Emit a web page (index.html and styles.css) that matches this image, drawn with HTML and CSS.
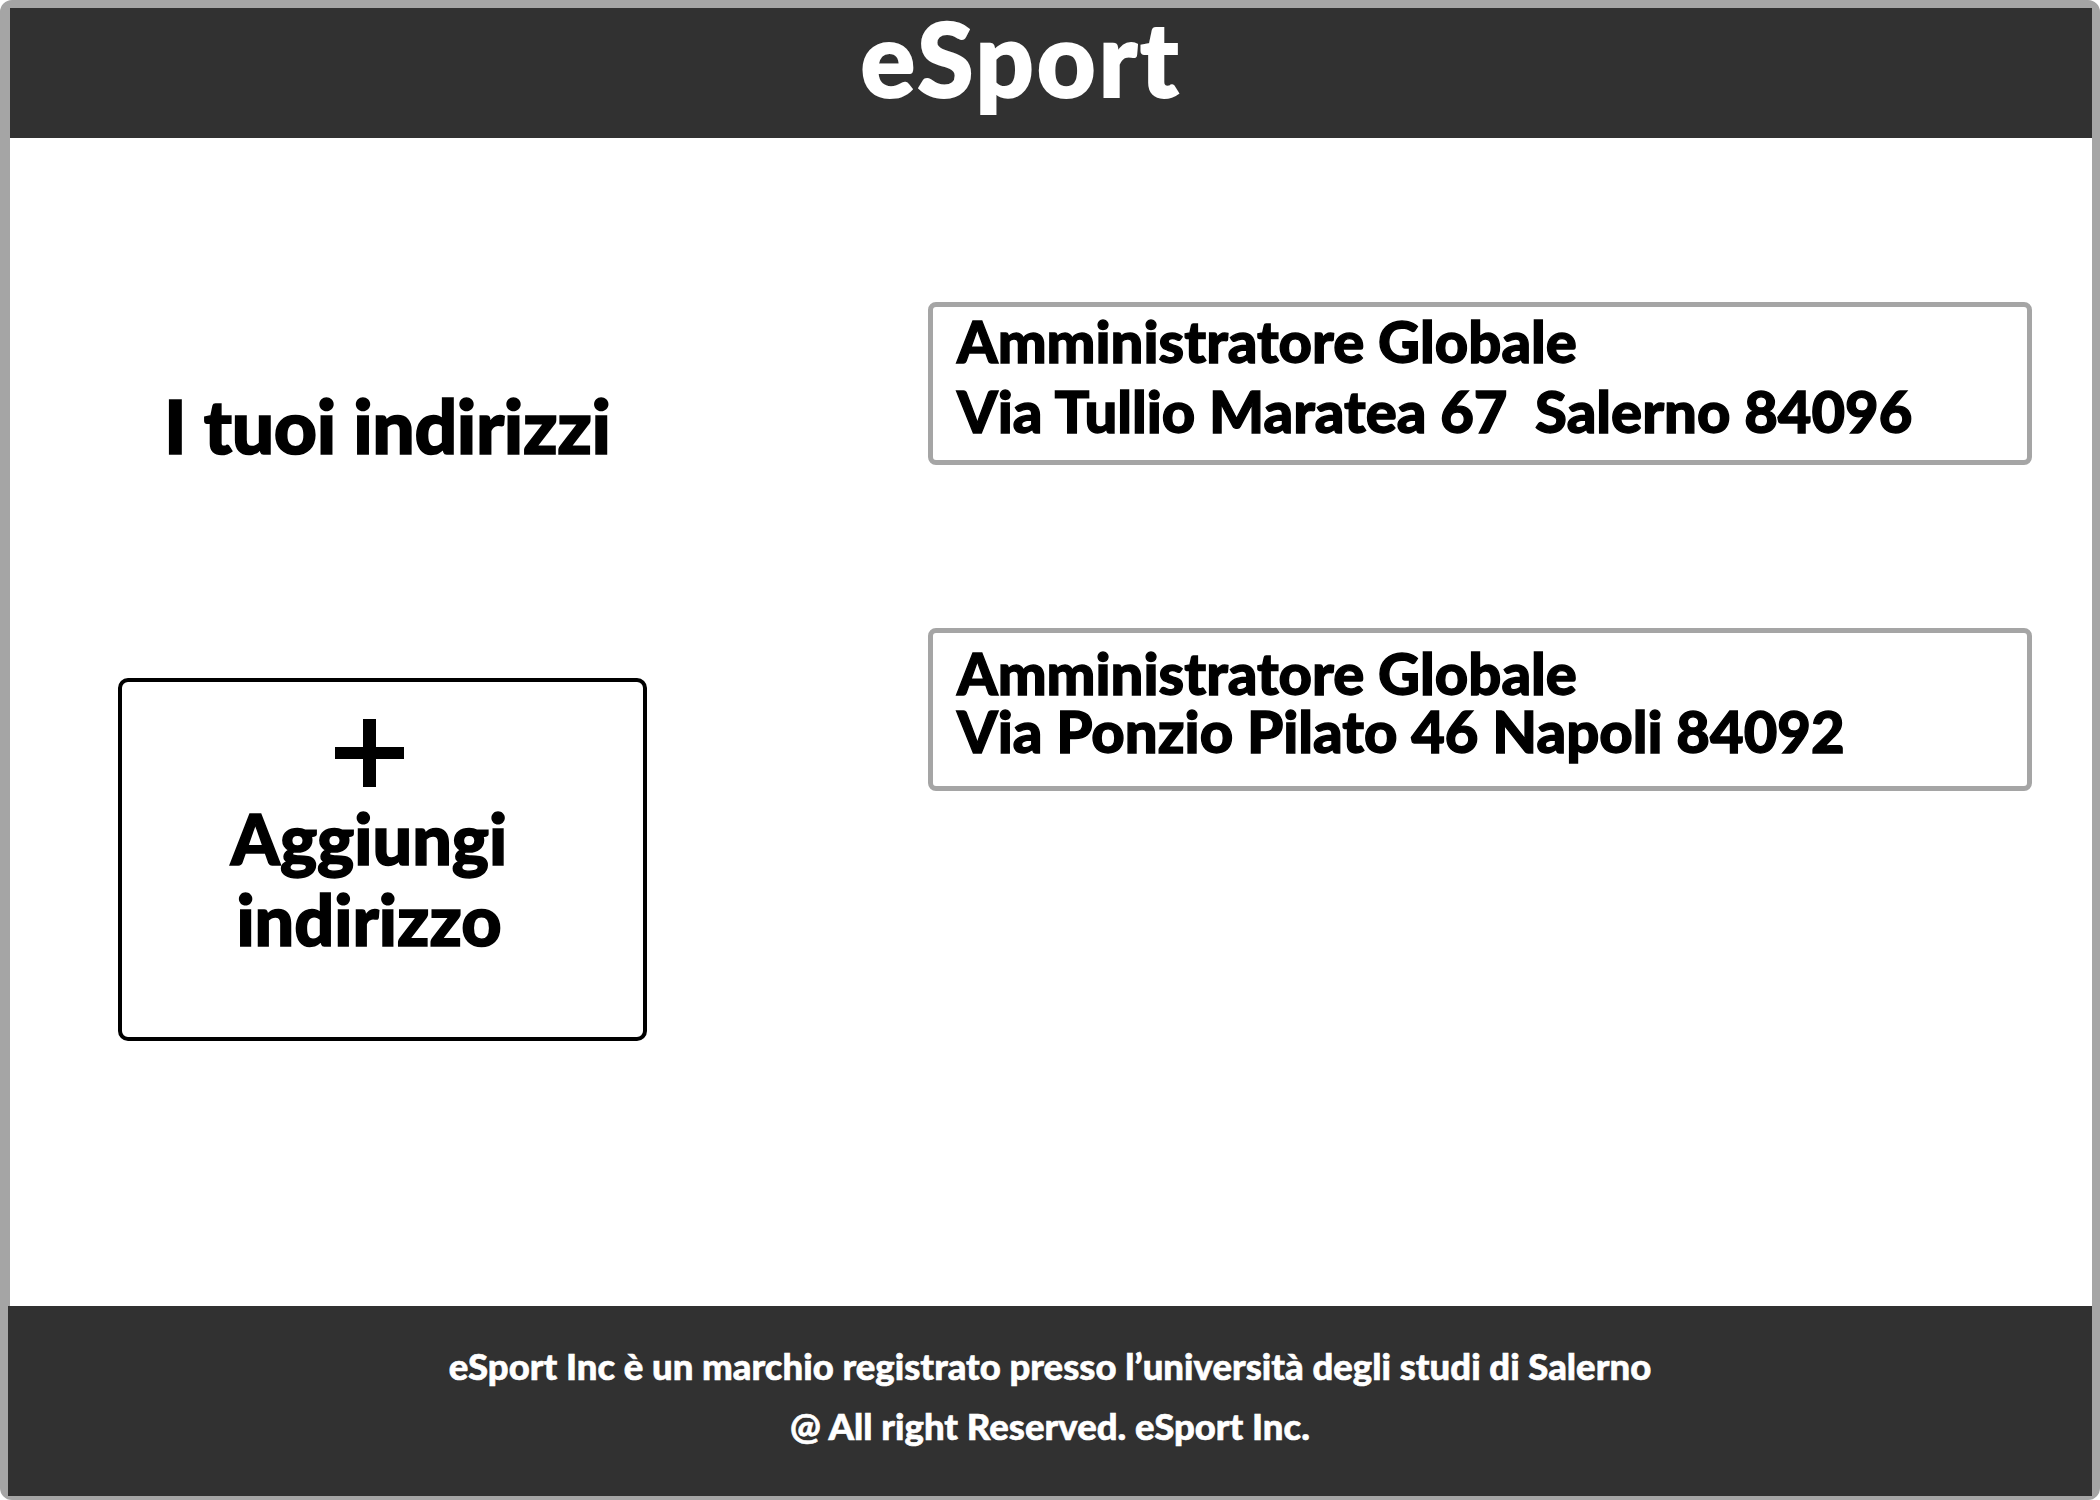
FILE: index.html
```html
<!DOCTYPE html>
<html lang="it">
<head>
<meta charset="utf-8">
<title>eSport - I tuoi indirizzi</title>
<link rel="stylesheet" href="styles.css">
</head>
<body>
<div class="page">
  <header class="topbar">
    <h1 class="brand">eSport</h1>
  </header>
  <main class="content">
    <section class="left-col">
      <h2 class="title">I tuoi indirizzi</h2>
      <a class="add-box" href="#">
        <svg class="plus" width="69" height="68" viewBox="0 0 69 68" aria-hidden="true">
          <rect x="28" y="0" width="13" height="68" fill="#000"/>
          <rect x="0" y="28" width="69" height="12" fill="#000"/>
        </svg>
        <span class="add-label">Aggiungi<br>indirizzo</span>
      </a>
    </section>
    <section class="right-col">
      <div class="card card-spaced">
        <p class="card-line">Amministratore Globale</p>
        <p class="card-line">Via Tullio Maratea 67&nbsp; Salerno 84096</p>
      </div>
      <div class="card">
        <p class="card-line">Amministratore Globale</p>
        <p class="card-line">Via Ponzio Pilato 46 Napoli 84092</p>
      </div>
    </section>
  </main>
  <footer class="footer">
    <p class="footer-line">eSport Inc è un marchio registrato presso l’università degli studi di Salerno</p>
    <p class="footer-line">@ All right Reserved. eSport Inc.</p>
  </footer>
</div>
</body>
</html>
```

FILE: styles.css
```css
html, body {
  margin: 0;
  padding: 0;
  background: #ffffff;
}

body {
  font-family: "Lato", "Liberation Sans", sans-serif;
  font-weight: 900;
  color: #000;
}

.page {
  box-sizing: border-box;
  width: 2100px;
  height: 1500px;
  border-style: solid;
  border-color: #a5a5a5;
  border-width: 8px 8px 4px 10px;
  border-radius: 12px;
  background: #ffffff;
  display: flex;
  flex-direction: column;
}

.topbar {
  height: 130px;
  background: #313131;
  padding-right: 60px;
  display: flex;
  justify-content: center;
  align-items: flex-start;
}

.brand {
  margin: 0;
  color: #ffffff;
  font-size: 102px;
  line-height: 100px;
  font-weight: 900;
  letter-spacing: 3px;
  -webkit-text-stroke: 2px #ffffff;
}

.content {
  flex: 1;
  display: flex;
  align-items: flex-start;
}

.left-col {
  width: 529px;
  margin-left: 108px;
  padding-top: 250px;
  display: flex;
  flex-direction: column;
}

.title {
  margin: 0 0 0 46px;
  font-size: 75px;
  line-height: 75px;
  font-weight: 900;
  letter-spacing: -0.4px;
  -webkit-text-stroke: 1.6px #000;
}

.add-box {
  margin-top: 215px;
  box-sizing: border-box;
  width: 529px;
  height: 363px;
  border: 4px solid #000;
  border-radius: 10px;
  padding: 37px 27px 0 0;
  display: flex;
  flex-direction: column;
  align-items: center;
  color: #000;
  text-decoration: none;
}

.plus {
  display: block;
}

.add-label {
  margin-top: 11px;
  font-size: 70px;
  line-height: 81px;
  font-weight: 900;
  text-align: center;
  letter-spacing: 0;
  -webkit-text-stroke: 1.5px #000;
}

.right-col {
  margin-left: 281px;
  padding-top: 164px;
  width: 1104px;
  display: flex;
  flex-direction: column;
  gap: 163px;
}

.card {
  box-sizing: border-box;
  height: 163px;
  border: 5px solid #a5a5a5;
  border-radius: 8px;
  padding: 11px 20px 0 24px;
}

.card-spaced {
  padding-top: 5px;
}

.card-spaced .card-line + .card-line {
  margin-top: 12px;
}

.card-line {
  margin: 0;
  font-size: 58px;
  line-height: 58px;
  font-weight: 900;
  letter-spacing: 0;
  white-space: pre;
  -webkit-text-stroke: 1.3px #000;
}

.footer {
  height: 190px;
  margin-left: -2px;
  background: #313131;
  color: #ffffff;
  box-sizing: border-box;
  padding-top: 30px;
  text-align: center;
}

.footer-line {
  margin: 0;
  font-size: 36.5px;
  line-height: 60px;
  font-weight: 900;
  -webkit-text-stroke: 0.6px #ffffff;
}
```
